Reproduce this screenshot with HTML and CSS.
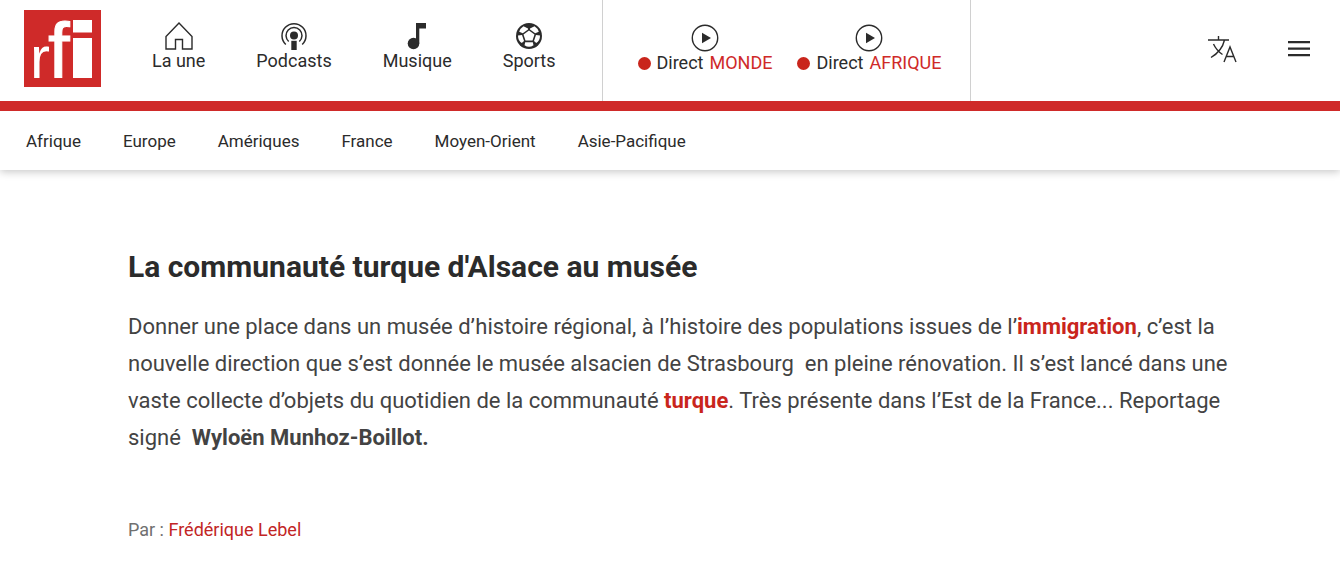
FILE: index.html
```
<!DOCTYPE html>
<html lang="fr">
<head>
<meta charset="utf-8">
<meta name="viewport" content="width=device-width, initial-scale=1">
<title>La communauté turque d'Alsace au musée</title>
<link rel="stylesheet" href="styles.css">
</head>
<body>
<header class="site-header">
  <div class="topbar">
    <a class="logo" href="#" aria-label="RFI">
      <svg width="77" height="77" viewBox="0 0 77 77">
        <rect width="77" height="77" fill="#cf2a29"/>
        <text class="logo-r" x="6" y="68">r</text>
        <text class="logo-f" x="24" y="68">f</text>
        <rect x="49" y="10" width="19" height="12.500" fill="#fff"/>
        <rect x="49" y="28" width="19" height="40" fill="#fff"/>
      </svg>
    </a>
    <nav class="main-nav" aria-label="Principal">
      <a class="nav-item" href="#">
        <svg class="icon" viewBox="0 0 28 28" fill="none" stroke="#2b2b2b" stroke-width="1.4"><path d="M1 27V14.500L14 1L27 14.500V27H17.500V17.500H10.500V27Z"/></svg>
        <span>La une</span>
      </a>
      <a class="nav-item" href="#">
        <svg class="icon" viewBox="0 0 28 28" fill="none" stroke="#2b2b2b" stroke-width="1.5"><path d="M5.800 22.500A12 12 0 1 1 22.200 22.500M8.700 19.500A8 8 0 1 1 19.300 19.500"/><circle cx="14" cy="13.500" r="4" fill="#2b2b2b" stroke="none"/><path d="M11.300 18.800H16.700V28H11.300Z" fill="#2b2b2b" stroke="none"/></svg>
        <span>Podcasts</span>
      </a>
      <a class="nav-item" href="#">
        <svg class="icon" viewBox="0 0 28 28" fill="#2b2b2b"><circle cx="10.500" cy="21.500" r="5.800"/><path d="M13 1H23V6.500H16.300V21.500H13Z"/></svg>
        <span>Musique</span>
      </a>
      <a class="nav-item" href="#">
        <svg class="icon" viewBox="0 0 28 28"><circle cx="14" cy="14" r="13" fill="#2b2b2b"/><g fill="#fff"><path d="M14 8.500L19.500 12.500L17.500 18.500H10.500L8.500 12.500Z"/><path d="M8.500 4.200L13 6.500V7.500L7.800 11.200L4.200 9.800Q5.200 6.200 8.500 4.200Z"/><path d="M19.500 4.200L15 6.500V7.500L20.200 11.200L23.800 9.800Q22.800 6.200 19.500 4.200Z"/><path d="M3 13.500L7 13L9 19L6.800 21Q3 19 3 13.500Z"/><path d="M25 13.500L21 13L19 19L21.200 21Q25 19 25 13.500Z"/><path d="M10.200 20.300H17.800L18.500 23.300Q14 26.300 9.500 23.300Z"/></g></svg>
        <span>Sports</span>
      </a>
    </nav>
    <div class="live">
      <a class="live-item" href="#">
        <svg class="icon" viewBox="0 0 28 28" fill="none"><circle cx="14" cy="14" r="12.700" stroke="#2b2b2b" stroke-width="1.400"/><path d="M11 8.800L20 14L11 19.200Z" fill="#2b2b2b"/></svg>
        <span class="live-label"><i class="dot"></i>Direct <span class="red">MONDE</span></span>
      </a>
      <a class="live-item" href="#">
        <svg class="icon" viewBox="0 0 28 28" fill="none"><circle cx="14" cy="14" r="12.700" stroke="#2b2b2b" stroke-width="1.400"/><path d="M11 8.800L20 14L11 19.200Z" fill="#2b2b2b"/></svg>
        <span class="live-label"><i class="dot"></i>Direct <span class="red">AFRIQUE</span></span>
      </a>
    </div>
    <div class="tools">
      <button class="tool" type="button" aria-label="Langues">
        <svg width="30" height="28" viewBox="0 0 30 28" fill="none" stroke="#2b2b2b" stroke-width="1.400"><path d="M0 5H21M10.500 1V5M16.500 5Q14 16 3 22.500M5.500 9Q8.500 15.500 14.500 19.500M16 27L22 12L28 27M18.200 21.500H25.800"/></svg>
      </button>
      <button class="tool" type="button" aria-label="Menu">
        <svg width="22" height="28" viewBox="0 0 22 28" fill="#2b2b2b"><path d="M0 6H22V8.200H0ZM0 12.500H22V14.700H0ZM0 19H22V21.200H0Z"/></svg>
      </button>
    </div>
  </div>
  <nav class="sub-nav" aria-label="Régions">
    <a href="#">Afrique</a>
    <a href="#">Europe</a>
    <a href="#">Amériques</a>
    <a href="#">France</a>
    <a href="#">Moyen-Orient</a>
    <a href="#">Asie-Pacifique</a>
  </nav>
</header>
<main class="article">
  <h1>La communauté turque d'Alsace au musée</h1>
  <p class="intro">Donner une place dans un musée d’histoire régional, à l’histoire des populations issues de l’<a href="#">immigration</a>, c’est la nouvelle direction que s’est donnée le musée alsacien de Strasbourg&nbsp; en pleine rénovation. Il s’est lancé dans une vaste collecte d’objets du quotidien de la communauté <a href="#">turque</a>. Très présente dans l’Est de la France... Reportage signé&nbsp; <strong>Wyloën Munhoz-Boillot.</strong></p>
  <p class="byline">Par : <a href="#">Frédérique Lebel</a></p>
</main>
</body>
</html>
```
FILE: styles.css
```
* { box-sizing: border-box; }
body {
  margin: 0;
  background: #fff;
  color: #2b2b2b;
  font-family: Roboto, "Liberation Sans", sans-serif;
}
a { color: inherit; text-decoration: none; }
.site-header { box-shadow: 0 2px 8px rgba(0, 0, 0, .22); }
.topbar {
  display: flex;
  height: 111px;
  padding-left: 24px;
  border-bottom: 10px solid #cf2a29;
}
.logo { margin-top: 10px; }
.logo svg { display: block; }
.logo text { fill: #fff; font-family: "Liberation Sans", sans-serif; }
.logo .logo-r { font-size: 60px; }
.logo .logo-f { font-size: 78px; stroke: #fff; stroke-width: 1px; }
.main-nav {
  display: flex;
  gap: 51px;
  padding: 22px 46px 0 51px;
}
.nav-item, .live-item {
  display: flex;
  flex-direction: column;
  align-items: center;
  font-size: 18px;
  line-height: 22px;
}
.icon { display: block; width: 28px; height: 28px; }
.live {
  display: flex;
  gap: 25px;
  padding: 24px 29px 0 35px;
  border: solid #d0d0d0;
  border-width: 0 1px;
}
.live-label { display: flex; align-items: center; gap: 6px; }
.dot { width: 13px; height: 13px; border-radius: 50%; background: #c9251c; }
.red { color: #cf2a29; }
.tools {
  display: flex;
  align-items: center;
  gap: 50px;
  margin-left: auto;
  padding: 0 30px 4px 0;
}
.tool { display: block; padding: 0; border: 0; background: none; cursor: pointer; }
.tool svg { display: block; }
.sub-nav {
  display: flex;
  align-items: center;
  gap: 42px;
  height: 59px;
  padding-left: 26px;
  font-size: 17px;
}
.article { padding: 78px 112px 32px 128px; }
h1 {
  margin: 0;
  font-size: 30px;
  font-weight: 700;
  line-height: 38px;
}
.intro {
  margin: 22px 0 0;
  color: #434343;
  font-size: 22px;
  line-height: 37px;
}
.intro a { color: #c9251c; font-weight: 700; }
.byline {
  margin: 62px 0 0;
  color: #707070;
  font-size: 18px;
  line-height: 24px;
}
.byline a { color: #c22525; }
```
